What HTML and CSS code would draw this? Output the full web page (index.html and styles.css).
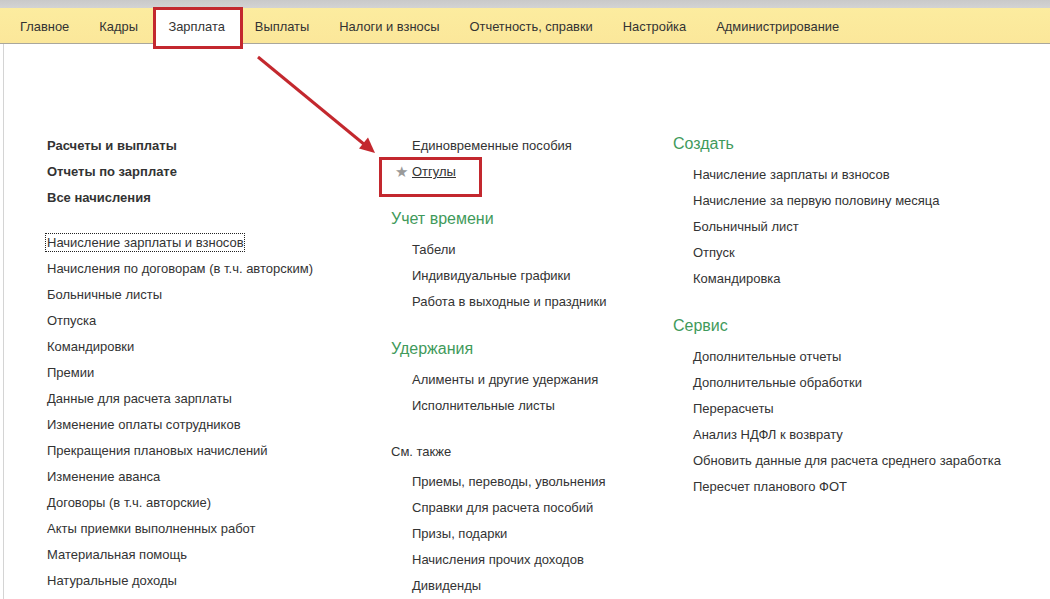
FILE: index.html
```html
<!DOCTYPE html>
<html lang="ru">
<head>
<meta charset="utf-8">
<title>Зарплата</title>
<link rel="stylesheet" href="styles.css">
</head>
<body>
<div class="page">
  <div class="topstrip"></div>
  <nav class="nav">
    <a class="tab">Главное</a>
    <a class="tab">Кадры</a>
    <a class="tab active">Зарплата</a>
    <a class="tab">Выплаты</a>
    <a class="tab">Налоги и взносы</a>
    <a class="tab">Отчетность, справки</a>
    <a class="tab">Настройка</a>
    <a class="tab">Администрирование</a>
  </nav>
  <main class="content">
    <div class="col col1">
      <div class="row bold">Расчеты и выплаты</div>
      <div class="row bold">Отчеты по зарплате</div>
      <div class="row bold">Все начисления</div>
      <div class="list">
        <div class="row"><span class="focus">Начисление зарплаты и взносов</span></div>
        <div class="row">Начисления по договорам (в т.ч. авторским)</div>
        <div class="row">Больничные листы</div>
        <div class="row">Отпуска</div>
        <div class="row">Командировки</div>
        <div class="row">Премии</div>
        <div class="row">Данные для расчета зарплаты</div>
        <div class="row">Изменение оплаты сотрудников</div>
        <div class="row">Прекращения плановых начислений</div>
        <div class="row">Изменение аванса</div>
        <div class="row">Договоры (в т.ч. авторские)</div>
        <div class="row">Акты приемки выполненных работ</div>
        <div class="row">Материальная помощь</div>
        <div class="row">Натуральные доходы</div>
      </div>
    </div>
    <div class="col col2">
      <section class="group first">
        <div class="row item">Единовременные пособия</div>
        <div class="row item"><span class="star">★</span><span class="link">Отгулы</span></div>
      </section>
      <section class="group">
        <h2 class="gtitle">Учет времени</h2>
        <div class="row item">Табели</div>
        <div class="row item">Индивидуальные графики</div>
        <div class="row item">Работа в выходные и праздники</div>
      </section>
      <section class="group">
        <h2 class="gtitle">Удержания</h2>
        <div class="row item">Алименты и другие удержания</div>
        <div class="row item">Исполнительные листы</div>
      </section>
      <section class="group see-also">
        <h2 class="gtitle small">См. также</h2>
        <div class="row item">Приемы, переводы, увольнения</div>
        <div class="row item">Справки для расчета пособий</div>
        <div class="row item">Призы, подарки</div>
        <div class="row item">Начисления прочих доходов</div>
        <div class="row item">Дивиденды</div>
      </section>
    </div>
    <div class="col col3">
      <section class="group first">
        <h2 class="gtitle">Создать</h2>
        <div class="row item">Начисление зарплаты и взносов</div>
        <div class="row item">Начисление за первую половину месяца</div>
        <div class="row item">Больничный лист</div>
        <div class="row item">Отпуск</div>
        <div class="row item">Командировка</div>
      </section>
      <section class="group">
        <h2 class="gtitle">Сервис</h2>
        <div class="row item">Дополнительные отчеты</div>
        <div class="row item">Дополнительные обработки</div>
        <div class="row item">Перерасчеты</div>
        <div class="row item">Анализ НДФЛ к возврату</div>
        <div class="row item">Обновить данные для расчета среднего заработка</div>
        <div class="row item">Пересчет планового ФОТ</div>
      </section>
    </div>
  </main>

  <div class="mark mark-tab"></div>
  <div class="mark mark-link"></div>
  <svg class="arrow" width="1050" height="599" viewBox="0 0 1050 599">
    <line x1="258" y1="57" x2="365" y2="145" stroke="#c3282e" stroke-width="3"/>
    <polygon points="375,153 359,148.5 368,137.5" fill="#c3282e"/>
  </svg>
</div>
</body>
</html>
```

FILE: styles.css
```css
* { box-sizing: border-box; }
html, body { margin: 0; padding: 0; background: #ffffff; }
body {
  font-family: "Liberation Sans", Arial, sans-serif;
  font-size: 13px;
  color: #333333;
}
.page {
  position: relative;
  width: 1050px;
  height: 599px;
  overflow: hidden;
}
.topstrip {
  height: 8px;
  background: linear-gradient(#c9c9c9, #d3d3d3);
}
.nav {
  display: flex;
  height: 36px;
  padding-left: 5px;
  background: linear-gradient(#fcec9f, #fbe79a);
  border-bottom: 1px solid #a9a79c;
  font-size: 12.9px;
}
.tab {
  display: block;
  padding: 2px 15px 0;
  line-height: 33px;
  height: 35px;
  color: #333333;
  white-space: nowrap;
}
.tab.active {
  background: #ffffff;
  height: 36px;
  margin-left: 3px;
  padding: 2px 15px 0 12.5px;
}
.content {
  display: grid;
  grid-template-columns: 344px 282px 1fr;
  padding: 89px 0 0 43px;
  margin-left: 3px;
  border-left: 1px solid #d4d4d4;
  height: 555px;
}
.row {
  height: 26px;
  line-height: 26px;
  white-space: nowrap;
}
.bold { font-weight: bold; }
.list { margin-top: 19px; }
.focus {
  outline: 1px dotted #222;
  outline-offset: 0;
  padding: 1px 0 1px 1px;
  margin-left: -1px;
}
.group { margin-top: 21px; }
.group.first { margin-top: 0; }
.group.see-also { margin-top: 20px; }
.col3 { margin-top: -2px; }
.gtitle {
  margin: 0 0 5px 0;
  font-weight: normal;
  font-size: 16px;
  height: 26px;
  line-height: 26px;
  color: #3f9a5b;
}
.gtitle.small {
  font-size: 13px;
  color: #333333;
  margin-bottom: 4px;
}
.item { padding-left: 21px; }
.col3 .item { padding-left: 20px; }
.star {
  display: inline-block;
  width: 17px;
  margin-left: -17px;
  color: #9a9a9a;
  font-family: "DejaVu Sans", sans-serif;
  font-size: 15px;
  line-height: 26px;
  vertical-align: top;
}
.link { text-decoration: underline; }

.mark {
  position: absolute;
  border: 3px solid #c3282e;
}
.mark-tab { left: 153px; top: 7px; width: 90px; height: 42px; }
.mark-link { left: 379px; top: 157px; width: 103px; height: 40px; }
.arrow { position: absolute; left: 0; top: 0; pointer-events: none; }
```
